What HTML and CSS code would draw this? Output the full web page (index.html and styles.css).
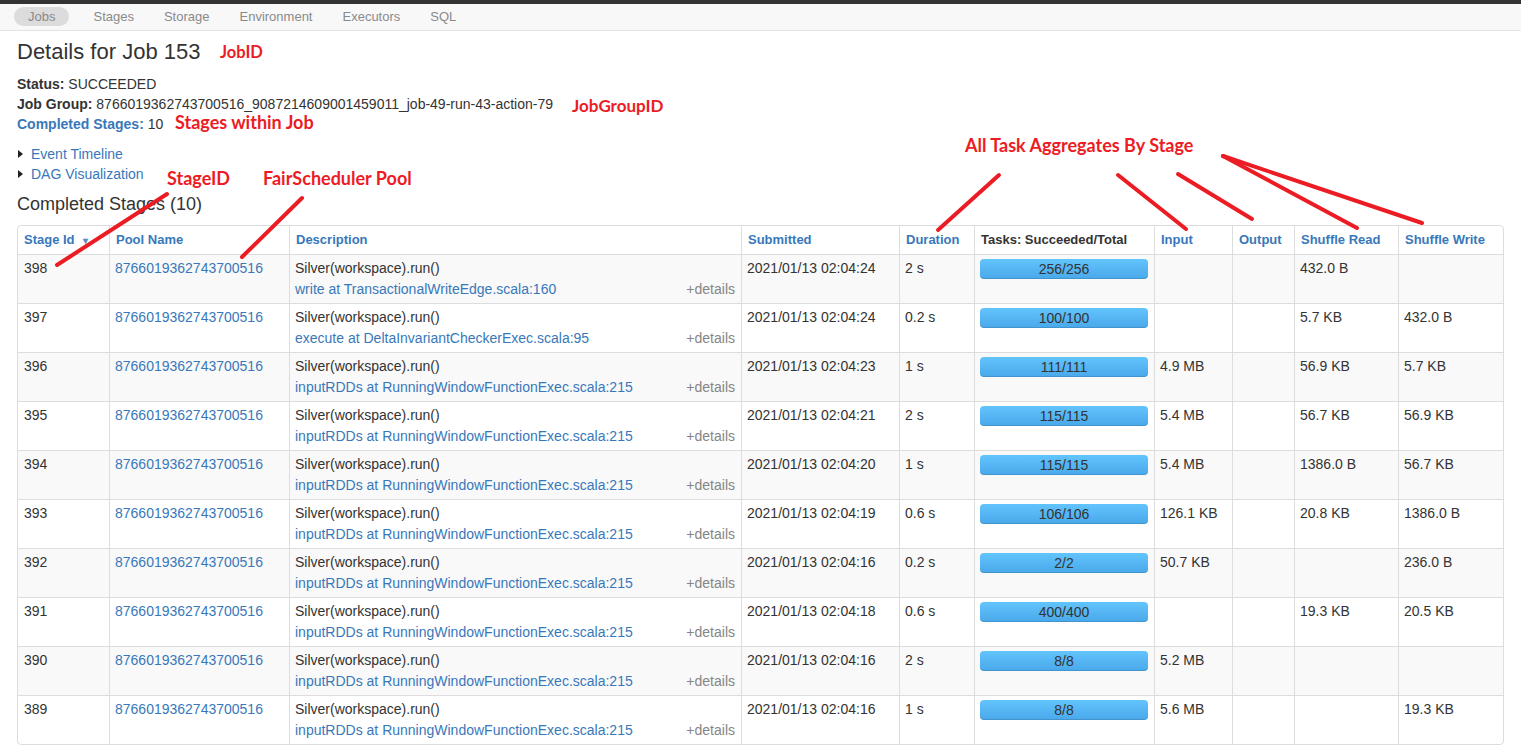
FILE: index.html
```html
<!DOCTYPE html>
<html>
<head>
<meta charset="utf-8">
<link rel="stylesheet" href="styles.css">
</head>
<body>
<div class="topline"></div>
<nav class="navbar">
  <ul class="nav">
    <li class="active"><a>Jobs</a></li>
    <li><a>Stages</a></li>
    <li><a>Storage</a></li>
    <li><a>Environment</a></li>
    <li><a>Executors</a></li>
    <li><a>SQL</a></li>
  </ul>
</nav>
<main class="page">
  <h3 class="title">Details for Job 153</h3>
  <ul class="summary">
    <li><strong>Status:</strong> SUCCEEDED</li>
    <li><strong>Job Group:</strong> 8766019362743700516_9087214609001459011_job-49-run-43-action-79</li>
    <li><a class="link"><strong>Completed Stages:</strong></a> 10</li>
  </ul>
  <div class="expanders">
    <div class="expander"><span class="arrow"></span><a class="link">Event Timeline</a></div>
    <div class="expander"><span class="arrow"></span><a class="link">DAG Visualization</a></div>
  </div>
  <h4 class="section">Completed Stages (10)</h4>
  <table class="stages">
    <colgroup>
      <col class="c-id"><col class="c-pool"><col class="c-desc"><col class="c-sub"><col class="c-dur"><col class="c-tasks"><col class="c-in"><col class="c-out"><col class="c-sr"><col class="c-sw">
    </colgroup>
    <thead>
      <tr>
        <th><a class="link">Stage Id <span class="sort">&#9662;</span></a></th>
        <th><a class="link">Pool Name</a></th>
        <th><a class="link">Description</a></th>
        <th><a class="link">Submitted</a></th>
        <th><a class="link">Duration</a></th>
        <th>Tasks: Succeeded/Total</th>
        <th><a class="link">Input</a></th>
        <th><a class="link">Output</a></th>
        <th><a class="link">Shuffle Read</a></th>
        <th><a class="link">Shuffle Write</a></th>
      </tr>
    </thead>
    <tbody>
      <tr>
        <td>398</td><td><a class="link">8766019362743700516</a></td>
        <td><div>Silver(workspace).run()</div><div class="desc2"><a class="link">write at TransactionalWriteEdge.scala:160</a><span class="details">+details</span></div></td>
        <td>2021/01/13 02:04:24</td><td>2 s</td>
        <td><div class="progress">256/256</div></td>
        <td></td><td></td><td>432.0 B</td><td></td>
      </tr>
      <tr>
        <td>397</td><td><a class="link">8766019362743700516</a></td>
        <td><div>Silver(workspace).run()</div><div class="desc2"><a class="link">execute at DeltaInvariantCheckerExec.scala:95</a><span class="details">+details</span></div></td>
        <td>2021/01/13 02:04:24</td><td>0.2 s</td>
        <td><div class="progress">100/100</div></td>
        <td></td><td></td><td>5.7 KB</td><td>432.0 B</td>
      </tr>
      <tr>
        <td>396</td><td><a class="link">8766019362743700516</a></td>
        <td><div>Silver(workspace).run()</div><div class="desc2"><a class="link">inputRDDs at RunningWindowFunctionExec.scala:215</a><span class="details">+details</span></div></td>
        <td>2021/01/13 02:04:23</td><td>1 s</td>
        <td><div class="progress">111/111</div></td>
        <td>4.9 MB</td><td></td><td>56.9 KB</td><td>5.7 KB</td>
      </tr>
      <tr>
        <td>395</td><td><a class="link">8766019362743700516</a></td>
        <td><div>Silver(workspace).run()</div><div class="desc2"><a class="link">inputRDDs at RunningWindowFunctionExec.scala:215</a><span class="details">+details</span></div></td>
        <td>2021/01/13 02:04:21</td><td>2 s</td>
        <td><div class="progress">115/115</div></td>
        <td>5.4 MB</td><td></td><td>56.7 KB</td><td>56.9 KB</td>
      </tr>
      <tr>
        <td>394</td><td><a class="link">8766019362743700516</a></td>
        <td><div>Silver(workspace).run()</div><div class="desc2"><a class="link">inputRDDs at RunningWindowFunctionExec.scala:215</a><span class="details">+details</span></div></td>
        <td>2021/01/13 02:04:20</td><td>1 s</td>
        <td><div class="progress">115/115</div></td>
        <td>5.4 MB</td><td></td><td>1386.0 B</td><td>56.7 KB</td>
      </tr>
      <tr>
        <td>393</td><td><a class="link">8766019362743700516</a></td>
        <td><div>Silver(workspace).run()</div><div class="desc2"><a class="link">inputRDDs at RunningWindowFunctionExec.scala:215</a><span class="details">+details</span></div></td>
        <td>2021/01/13 02:04:19</td><td>0.6 s</td>
        <td><div class="progress">106/106</div></td>
        <td>126.1 KB</td><td></td><td>20.8 KB</td><td>1386.0 B</td>
      </tr>
      <tr>
        <td>392</td><td><a class="link">8766019362743700516</a></td>
        <td><div>Silver(workspace).run()</div><div class="desc2"><a class="link">inputRDDs at RunningWindowFunctionExec.scala:215</a><span class="details">+details</span></div></td>
        <td>2021/01/13 02:04:16</td><td>0.2 s</td>
        <td><div class="progress">2/2</div></td>
        <td>50.7 KB</td><td></td><td></td><td>236.0 B</td>
      </tr>
      <tr>
        <td>391</td><td><a class="link">8766019362743700516</a></td>
        <td><div>Silver(workspace).run()</div><div class="desc2"><a class="link">inputRDDs at RunningWindowFunctionExec.scala:215</a><span class="details">+details</span></div></td>
        <td>2021/01/13 02:04:18</td><td>0.6 s</td>
        <td><div class="progress">400/400</div></td>
        <td></td><td></td><td>19.3 KB</td><td>20.5 KB</td>
      </tr>
      <tr>
        <td>390</td><td><a class="link">8766019362743700516</a></td>
        <td><div>Silver(workspace).run()</div><div class="desc2"><a class="link">inputRDDs at RunningWindowFunctionExec.scala:215</a><span class="details">+details</span></div></td>
        <td>2021/01/13 02:04:16</td><td>2 s</td>
        <td><div class="progress">8/8</div></td>
        <td>5.2 MB</td><td></td><td></td><td></td>
      </tr>
      <tr>
        <td>389</td><td><a class="link">8766019362743700516</a></td>
        <td><div>Silver(workspace).run()</div><div class="desc2"><a class="link">inputRDDs at RunningWindowFunctionExec.scala:215</a><span class="details">+details</span></div></td>
        <td>2021/01/13 02:04:16</td><td>1 s</td>
        <td><div class="progress">8/8</div></td>
        <td>5.6 MB</td><td></td><td></td><td>19.3 KB</td>
      </tr>
    </tbody>
  </table>
</main>

<div class="annotations">
  <span class="note n-jobid">JobID</span>
  <span class="note n-group">JobGroupID</span>
  <span class="note n-stages">Stages within Job</span>
  <span class="note n-agg">All Task Aggregates By Stage</span>
  <span class="note n-stageid">StageID</span>
  <span class="note n-pool">FairScheduler Pool</span>
  <svg class="strokes" width="1521" height="753" viewBox="0 0 1521 753">
    <g stroke="#ec1c24" stroke-width="4" stroke-linecap="round" fill="none">
      <line x1="167" y1="194" x2="57" y2="265"/>
      <line x1="302" y1="198" x2="242" y2="257"/>
      <line x1="999" y1="175" x2="938" y2="230"/>
      <line x1="1118" y1="175" x2="1186" y2="229"/>
      <line x1="1178" y1="174" x2="1252" y2="219"/>
      <line x1="1223" y1="156" x2="1357" y2="228"/>
      <line x1="1223" y1="156" x2="1422" y2="223"/>
    </g>
  </svg>
</div>
</body>
</html>
```

FILE: styles.css
```css
* { box-sizing: border-box; }

body {
  margin: 0;
  font-family: "Liberation Sans", Arial, Helvetica, sans-serif;
  font-size: 14px;
  line-height: 20px;
  color: #333;
  background: #fff;
  position: relative;
}

.topline {
  height: 4px;
  background: #333;
}

.navbar {
  height: 27px;
  background: #f8f8f8;
  border-bottom: 1px solid #e3e3e3;
}

.nav {
  list-style: none;
  margin: 0;
  padding: 3px 0 0 14px;
  display: flex;
}

.nav li a {
  display: block;
  height: 19px;
  line-height: 19px;
  padding: 0 15px;
  color: #8a8a8a;
  font-size: 13px;
}

.nav li.active {
  margin-right: 9px;
}

.nav li.active a {
  background: #dcdcdc;
  border-radius: 10px;
  padding: 0 14px;
}

.page {
  padding: 0 18px 0 17px;
}

.link {
  color: #3878ba;
  text-decoration: none;
}

.title {
  margin: 6px 0 7px;
  font-size: 22px;
  font-weight: normal;
  line-height: 30px;
  color: #333;
}

.summary {
  list-style: none;
  margin: 0;
  padding: 0;
}

.summary strong {
  font-weight: bold;
}

.expanders {
  margin-top: 10px;
}

.expander {
  display: flex;
  align-items: center;
  height: 20px;
}

.arrow {
  width: 0;
  height: 0;
  border-top: 4px solid transparent;
  border-bottom: 4px solid transparent;
  border-left: 5px solid #222;
  margin: 0 8px 0 1px;
}

.section {
  margin: 9px 0 10px;
  font-size: 18px;
  font-weight: normal;
  line-height: 22px;
  color: #333;
}

.stages {
  width: 1486px;
  table-layout: fixed;
  border-collapse: separate;
  border-spacing: 0;
  border: 1px solid #ddd;
  border-radius: 4px;
}

.c-id { width: 91px; }
.c-pool { width: 180px; }
.c-desc { width: 452px; }
.c-sub { width: 158px; }
.c-dur { width: 75px; }
.c-tasks { width: 180px; }
.c-in { width: 78px; }
.c-out { width: 62px; }
.c-sr { width: 104px; }
.c-sw { width: 105px; }

.stages th,
.stages td {
  text-align: left;
  vertical-align: top;
  border-left: 1px solid #ddd;
  border-top: 1px solid #ddd;
}

.stages th:first-child,
.stages td:first-child {
  border-left: 0;
}

.stages th {
  border-top: 0;
  height: 27px;
  padding: 4px 6px 3px;
  font-size: 13px;
  font-weight: bold;
  color: #333;
  white-space: nowrap;
}

.sort {
  font-size: 10px;
  color: #5a8dc4;
  margin-left: 5px;
}

.stages td {
  height: 49px;
  padding: 3px 6px 3px 5px;
  line-height: 21px;
}

.stages td:first-child {
  padding-left: 6px;
}

.stages tbody tr:nth-child(odd) td {
  background: #f9f9f9;
}

.desc2 {
  display: flex;
  justify-content: space-between;
}

.details {
  color: #858585;
  margin-right: 0;
}

.progress {
  height: 20px;
  margin: 1px 0 0 0;
  border-radius: 4px;
  background: linear-gradient(to bottom, #62c4fd, #49a8ea);
  box-shadow: inset 0 -1px 0 rgba(0, 0, 0, 0.12);
  text-align: center;
  line-height: 20px;
  color: #333;
}

.annotations {
  position: absolute;
  left: 0;
  top: 0;
  width: 1521px;
  height: 753px;
  pointer-events: none;
}

.strokes {
  position: absolute;
  left: 0;
  top: 0;
}

.note {
  position: absolute;
  color: #ec1c24;
  font-family: Lato, "Open Sans", sans-serif;
  font-weight: bold;
  font-size: 18px;
  line-height: 22px;
  white-space: nowrap;
}

.n-jobid { left: 220px; top: 41px; font-size: 16.5px; }
.n-group { left: 572px; top: 95px; font-size: 17px; }
.n-stages { left: 175px; top: 111px; }
.n-agg { left: 965px; top: 134px; }
.n-stageid { left: 167px; top: 167px; }
.n-pool { left: 263px; top: 167px; }
```
